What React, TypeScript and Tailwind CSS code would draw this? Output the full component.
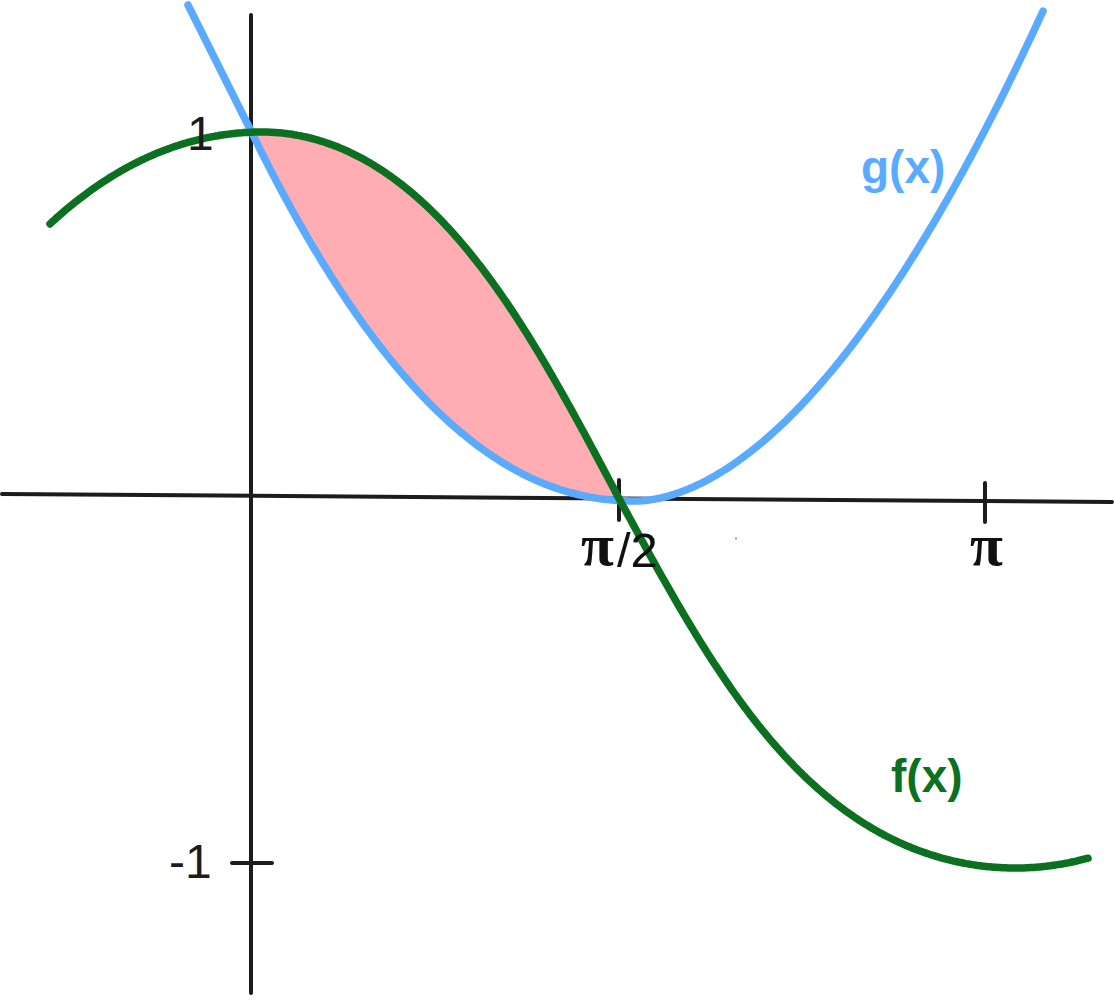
type Pt = [number, number];

// f(x): cosine-shaped curve, peak at x=262, crossing at x=618, trough at x=1014
const F_MID = 500;
const F_AMP = 368;

function fCurve(): Pt[] {
  const right: Pt[] = [];
  let phase = 0;
  for (let px = 262; px <= 1088; px += 2) {
    right.push([px, F_MID - F_AMP * Math.cos(phase)]);
    const s = Math.sin(phase) ** 2;
    const rate = px < 618 ? 0.00375 + 0.0014 * s : 0.00315 + 0.00185 * s;
    phase += rate * 2;
  }
  const left: Pt[] = [];
  phase = 0;
  for (let px = 262; px >= 50; px -= 2) {
    left.push([px, F_MID - F_AMP * Math.cos(phase)]);
    const s = Math.sin(phase) ** 2;
    phase -= (0.0032 + 0.0014 * s) * 2;
  }
  return [...left.reverse(), ...right.slice(1)];
}

// g(x): parabola-like curve with its minimum just right of π/2
function gY(px: number) {
  const dx = px - 636;
  if (dx < -384) return 133 - 2.0 * (-dx - 384);
  if (dx < 0) return 501 - 368 * Math.pow(-dx / 384, 2.138);
  return 501 - 57 * Math.pow(dx / 124, 1.81);
}

function gCurve(): Pt[] {
  const pts: Pt[] = [];
  for (let px = 188; px <= 1042; px += 2) pts.push([px, gY(px)]);
  pts.push([1043, gY(1043)]);
  return pts;
}

const line = (pts: Pt[]) =>
  pts.map((p, i) => `${i ? "L" : "M"}${p[0].toFixed(1)},${p[1].toFixed(1)}`).join(" ");

const sans = "'Liberation Sans', Arial, sans-serif";
const serif = "'Liberation Serif', 'Times New Roman', serif";

export default function App() {
  const f = fCurve();
  const g = gCurve();

  // shaded area between f (above) and g (below) on [0, π/2]
  const top = f.filter(p => p[0] >= 252 && p[0] <= 618);
  const bottom: Pt[] = [];
  for (let px = 618; px >= 252; px -= 2) bottom.push([px, gY(px)]);
  const area = line([...top, ...bottom]) + " Z";

  return (
    <div className="w-[1114px] h-[1000px] bg-white overflow-hidden">
      <svg width="1114" height="1000" viewBox="0 0 1114 1000" className="block">
        <path d={area} fill="#ffadb3" />

        {/* axes */}
        <g stroke="#1c1c1c" strokeWidth="4" strokeLinecap="round">
          <line x1="2" y1="494" x2="1112" y2="502" />
          <line x1="251" y1="15" x2="251" y2="993" />
          <line x1="619" y1="480" x2="619" y2="520" />
          <line x1="985" y1="483" x2="985" y2="522" />
          <line x1="232" y1="863" x2="272" y2="863" />
        </g>
        <rect x="735.5" y="537" width="1" height="3" fill="#777" />

        <path d={line(g)} fill="none" stroke="#5aabff" strokeWidth="7.5" strokeLinecap="round" strokeLinejoin="round" />
        <path d={line(f)} fill="none" stroke="#0b7121" strokeWidth="7.5" strokeLinecap="round" strokeLinejoin="round" />

        {/* tick labels */}
        <text x="187" y="150" fontFamily={sans} fontSize="48" fill="#1c1c1c">1</text>
        <text x="169" y="878" fontFamily={sans} fontSize="48" fill="#1c1c1c">-1</text>
        <text x="581" y="565" fontFamily={serif} fontSize="60" fontWeight="700" fill="#111">π</text>
        <text x="617" y="567" fontFamily={sans} fontSize="49" fill="#111">/2</text>
        <text x="970" y="565" fontFamily={serif} fontSize="60" fontWeight="700" fill="#111">π</text>

        {/* curve labels */}
        <text x="861" y="183" fontFamily={sans} fontSize="46" fontWeight="700" fill="#5aabff">g(x)</text>
        <text x="891" y="792" fontFamily={sans} fontSize="46" fontWeight="700" fill="#0b7121">f(x)</text>
      </svg>
    </div>
  );
}
